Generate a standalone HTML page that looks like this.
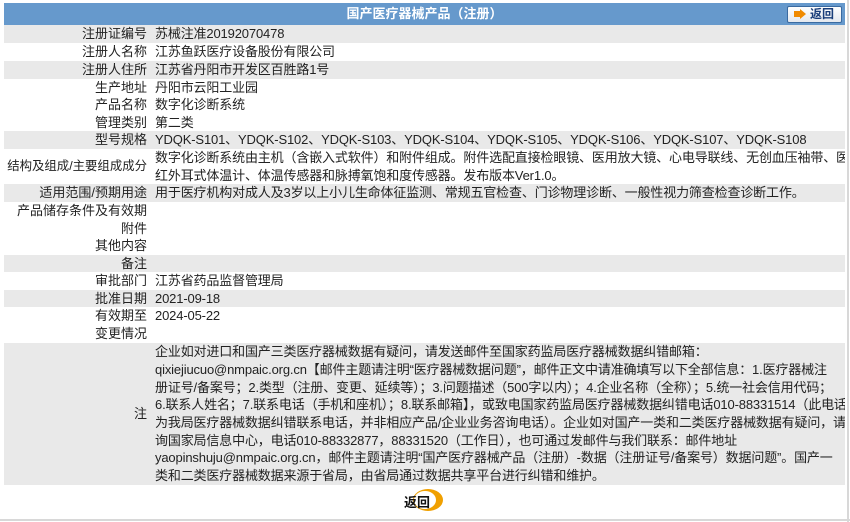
<!DOCTYPE html>
<html><head><meta charset="utf-8"><style>
*{margin:0;padding:0;box-sizing:border-box}
body{width:850px;height:522px;background:#fff;font-family:"Liberation Sans","Noto Sans CJK SC",sans-serif;font-size:13px;color:#222;position:relative;overflow:hidden}
.vline{position:absolute;left:847px;top:0;width:2px;height:522px;background:#d8d8d8}
.hline{position:absolute;left:0;top:519px;width:850px;height:2px;background:#d8d8d8}
.hd{position:absolute;left:4px;top:3px;width:841px;height:22px;background:#6699cc;color:#fff;font-weight:bold;text-align:center;line-height:22px}
.btn{position:absolute;left:787px;top:6px;width:55px;height:17px;border:1px solid #3a6aa0;border-radius:2px;background:linear-gradient(#fff,#e4e8ee);color:#1a3e7a;font-weight:bold;font-size:12px;line-height:15px;padding-left:22px}
.btn:before{content:"";position:absolute;left:6px;top:4px;width:6px;height:6px;background:#f08a00}
.btn:after{content:"";position:absolute;left:12px;top:2px;border-left:6px solid #f08a00;border-top:5px solid transparent;border-bottom:5px solid transparent}
.r{position:absolute;left:4px;width:841px;display:flex;line-height:17.7px;white-space:nowrap}
.g{background:#e9e9e9}
.l{width:143px;flex-shrink:0;text-align:right;display:flex;align-items:center;justify-content:flex-end}
.v{padding-left:8px;display:flex;align-items:center;flex:1;min-width:0;overflow:hidden;letter-spacing:-0.15px}
.ret{position:absolute;left:404px;top:492px;font-weight:bold;font-size:13px;color:#111;z-index:2}
.circ{position:absolute;left:413px;top:489px;width:30px;height:22px;border-radius:50%;background:#f0a000}
.circ:after{content:"";position:absolute;left:1px;top:2px;width:22px;height:18px;border-radius:50%;background:#fff}
</style></head><body>
<div class="vline"></div><div class="hline"></div>
<div class="hd">国产医疗器械产品（注册）</div>
<div class="btn">返回</div>
<div class="r g" style="top:25px;height:18px"><div class="l">注册证编号</div><div class="v">苏械注准20192070478</div></div>
<div class="r" style="top:43px;height:18px"><div class="l">注册人名称</div><div class="v">江苏鱼跃医疗设备股份有限公司</div></div>
<div class="r g" style="top:61px;height:18px"><div class="l">注册人住所</div><div class="v">江苏省丹阳市开发区百胜路1号</div></div>
<div class="r" style="top:79px;height:17px"><div class="l">生产地址</div><div class="v">丹阳市云阳工业园</div></div>
<div class="r" style="top:96px;height:18px"><div class="l">产品名称</div><div class="v">数字化诊断系统</div></div>
<div class="r" style="top:114px;height:17px"><div class="l">管理类别</div><div class="v">第二类</div></div>
<div class="r g" style="top:131px;height:18px"><div class="l">型号规格</div><div class="v">YDQK-S101、YDQK-S102、YDQK-S103、YDQK-S104、YDQK-S105、YDQK-S106、YDQK-S107、YDQK-S108</div></div>
<div class="r" style="top:149px;height:35px"><div class="l" style="font-size:12.4px">结构及组成/主要组成成分</div><div class="v">数字化诊断系统由主机（含嵌入式软件）和附件组成。附件选配直接检眼镜、医用放大镜、心电导联线、无创血压袖带、医用<br>红外耳式体温计、体温传感器和脉搏氧饱和度传感器。发布版本Ver1.0。</div></div>
<div class="r g" style="top:184px;height:18px"><div class="l">适用范围/预期用途</div><div class="v">用于医疗机构对成人及3岁以上小儿生命体征监测、常规五官检查、门诊物理诊断、一般性视力筛查检查诊断工作。</div></div>
<div class="r" style="top:202px;height:18px"><div class="l">产品储存条件及有效期</div><div class="v"></div></div>
<div class="r" style="top:220px;height:17px"><div class="l">附件</div><div class="v"></div></div>
<div class="r" style="top:237px;height:18px"><div class="l">其他内容</div><div class="v"></div></div>
<div class="r g" style="top:255px;height:17px"><div class="l">备注</div><div class="v"></div></div>
<div class="r" style="top:272px;height:18px"><div class="l">审批部门</div><div class="v">江苏省药品监督管理局</div></div>
<div class="r g" style="top:290px;height:17px"><div class="l">批准日期</div><div class="v">2021-09-18</div></div>
<div class="r" style="top:307px;height:18px"><div class="l">有效期至</div><div class="v">2024-05-22</div></div>
<div class="r" style="top:325px;height:18px"><div class="l">变更情况</div><div class="v"></div></div>
<div class="r g" style="top:343px;height:142px"><div class="l">注</div><div class="v">企业如对进口和国产三类医疗器械数据有疑问，请发送邮件至国家药监局医疗器械数据纠错邮箱：<br>qixiejiucuo@nmpaic.org.cn【邮件主题请注明“医疗器械数据问题”，邮件正文中请准确填写以下全部信息：1.医疗器械注<br>册证号/备案号；2.类型（注册、变更、延续等）；3.问题描述（500字以内）；4.企业名称（全称）；5.统一社会信用代码；<br>6.联系人姓名；7.联系电话（手机和座机）；8.联系邮箱】，或致电国家药监局医疗器械数据纠错电话010-88331514（此电话<br>为我局医疗器械数据纠错联系电话，并非相应产品/企业业务咨询电话）。企业如对国产一类和二类医疗器械数据有疑问，请咨<br>询国家局信息中心，电话010-88332877，88331520（工作日），也可通过发邮件与我们联系：邮件地址<br>yaopinshuju@nmpaic.org.cn，邮件主题请注明“国产医疗器械产品（注册）-数据（注册证号/备案号）数据问题”。国产一<br>类和二类医疗器械数据来源于省局，由省局通过数据共享平台进行纠错和维护。</div></div>
<div class="circ"></div>
<div class="ret">返回</div>
</body></html>
